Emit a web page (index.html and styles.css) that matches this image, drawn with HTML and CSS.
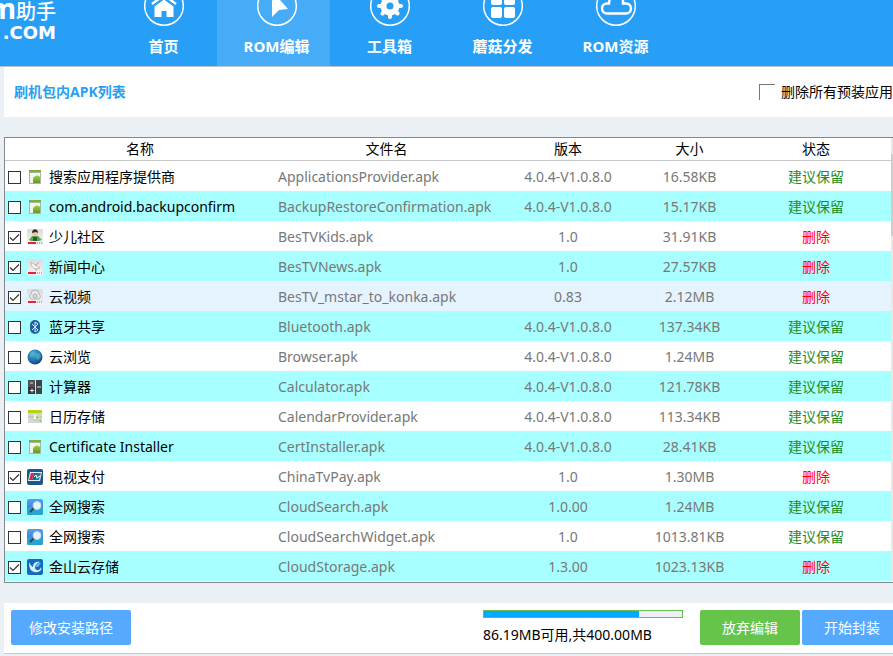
FILE: index.html
```html
<!DOCTYPE html>
<html lang="zh-CN">
<head>
<meta charset="utf-8">
<title>ROM编辑</title>
<link rel="stylesheet" href="styles.css">
</head>
<body>
<svg class="disNone">
	<linearGradient id="g-grey" x1="0" y1="0" x2="0" y2="1"><stop offset="0" stop-color="#dcdcdc"/><stop offset="1" stop-color="#f4f4f4"/></linearGradient>
	<linearGradient id="g-blue" x1="0" y1="0" x2="0" y2="1"><stop offset="0" stop-color="#5a9df0"/><stop offset="1" stop-color="#1878bc"/></linearGradient>
	<linearGradient id="g-green" x1="0" y1="0" x2="0" y2="1"><stop offset="0" stop-color="#9ccc4a"/><stop offset="1" stop-color="#5f9a22"/></linearGradient>
	<radialGradient id="g-globe" cx="0.4" cy="0.3" r="0.7"><stop offset="0" stop-color="#4fb4e4"/><stop offset="1" stop-color="#0d4686"/></radialGradient>
	<symbol id="i-apk" viewBox="0 0 16 16">
		<rect x="2" y="1" width="12" height="14" rx="1" fill="#a9b59c"/>
		<rect x="3" y="4" width="10" height="10" fill="#f2f4ee"/>
		<rect x="2" y="1" width="12" height="2" fill="#7fae3c"/>
		<path d="M6 14v-3a4 4 0 0 1 7-3v6z" fill="url(#g-green)"/>
	</symbol>
	<symbol id="i-kids" viewBox="0 0 16 16">
		<rect width="16" height="16" rx="1" fill="url(#g-grey)"/>
		<path d="M2 11l3-4h6l4 4-3 1H4z" fill="#55ad48"/>
		<circle cx="8" cy="4" r="3" fill="#efc3a4"/>
		<path d="M5 4c0-5 6-5 6 0L9 3z" fill="#3b2b27"/>
		<path d="M6 8h4v4H6z" fill="#3d4b55"/>
		<path d="M1 14h8" stroke="#e0243b" stroke-width="2"/>
		<path d="M10 14h5" stroke="#777" stroke-dasharray="1 1"/>
	</symbol>
	<symbol id="i-news" viewBox="0 0 16 16">
		<rect width="16" height="16" rx="1" fill="url(#g-grey)"/>
		<path d="M4 3c0 6 4 8 9 6z" fill="#f8f8f8" stroke="#bbb"/>
		<path d="M8 7l4-4M9 10v2" stroke="#aaa"/>
		<path d="M1 14h8" stroke="#e0243b" stroke-width="2"/>
		<path d="M10 14h5" stroke="#777" stroke-dasharray="1 1"/>
	</symbol>
	<symbol id="i-video" viewBox="0 0 16 16">
		<rect width="16" height="16" rx="1" fill="url(#g-grey)"/>
		<path d="M4 10a3 3 0 0 1 0-5 4 4 0 0 1 8 0 3 3 0 0 1 0 5z" fill="#e8e8e8" stroke="#b5b5b5"/>
		<circle cx="8" cy="7" r="2" fill="#ddd" stroke="#b0b0b0"/>
		<path d="M1 13h8" stroke="#e0243b" stroke-width="2"/>
		<path d="M10 13h5" stroke="#777" stroke-dasharray="1 1"/>
	</symbol>
	<symbol id="i-bt" viewBox="0 0 16 16">
		<rect x="3" y="1" width="10" height="14" rx="5" fill="#1c62a8"/>
		<path d="M5 5l6 6-3 2V3l3 2-6 6" fill="none" stroke="#d7ebfa"/>
	</symbol>
	<symbol id="i-globe" viewBox="0 0 16 16">
		<circle cx="8" cy="8" r="7.5" fill="url(#g-globe)"/>
		<path d="M3 4l3-2 2 2-2 3-3 1zM9 5l4-1 1 4-3 3-2-2z" fill="#55b8cc" opacity=".6"/>
	</symbol>
	<symbol id="i-calc" viewBox="0 0 16 16">
		<rect x="1" y="1" width="7" height="7" fill="#4e5256"/><rect x="1" y="8" width="7" height="7" fill="#34383c"/>
		<rect x="9" y="1" width="6" height="14" fill="#3f4347"/>
		<path d="M3 4h3M3 11.500h4M5 9.500v4M10 8h4" stroke="#dfe4e6"/>
	</symbol>
	<symbol id="i-cal" viewBox="0 0 16 16">
		<rect x="1" y="1" width="14" height="13" fill="#d5d8d2"/>
		<path d="M1 1h14v3H1z" fill="#b4d313"/>
		<path d="M1 8h5M6 11h5M11 8h4" stroke="#b7bbb4"/>
		<path d="M7 5l6 3-6 3z" fill="#eff5df"/>
		<path d="M9 7l3 1-2 2zM12 11h2v2z" fill="#80b92a"/>
	</symbol>
	<symbol id="i-pay" viewBox="0 0 16 16">
		<rect width="16" height="16" rx="2" fill="#1d568c"/>
		<path d="M3 3h12l-2 9H1z" fill="#e4eef4"/>
		<path d="M4 4h3l-2 7H2z" fill="#d82c3c"/><path d="M7 4h4l-2 7H5z" fill="#215d9e"/><path d="M10 4h4l-2 7H8z" fill="#1d8790"/>
		<path d="M7 8l2-2 1 3 3-2" fill="none" stroke="#fff"/>
	</symbol>
	<symbol id="i-search" viewBox="0 0 16 16">
		<rect width="16" height="16" rx="2" fill="url(#g-blue)"/>
		<path d="M0 9c4-3 8 2 16-1v6a2 2 0 0 1-2 2H2a2 2 0 0 1-2-2z" fill="#29a3d3"/>
		<path d="M7 9l-4 4" stroke="#26445a" stroke-width="2"/>
		<circle cx="10" cy="6.500" r="4" fill="#e6f3fa" stroke="#c3d2dc"/>
	</symbol>
	<symbol id="i-cloud" viewBox="0 0 16 16">
		<rect width="16" height="16" rx="2" fill="#126bbd"/>
		<path d="M2 3c0 8 3 11 9 10 3-1 4-3 3-5-1 4-5 4-6 1 0-3 2-5 5-6-5-1-7 2-7 5-2-1-3-3-4-5z" fill="#d7effc"/>
		<path d="M9 8c0-3 2-4 5-4l-3 4z" fill="#61bdf1"/>
	</symbol>
</svg>

<header class="top">
	<div class="logo">
		<span class="logo-name"><b>m</b>助手</span>
		<span class="logo-com">.COM</span>
	</div>
	<nav class="nav">
		<a href="#">
			<svg viewBox="0 0 40 40"><circle cx="20" cy="20" r="19.300"/><path class="fill" d="M10.500 31V20.500l9.500-7 9.500 7V31h-7v-6h-5v6z"/><path class="line" d="M8 18l12-9 12 9"/></svg>
			首页
		</a>
		<a href="#" class="active">
			<svg viewBox="0 0 40 40"><circle cx="20" cy="20" r="19.300"/><path class="fill" d="M15 5l16 18-9 1-7 7z"/></svg>
			ROM编辑
		</a>
		<a href="#">
			<svg viewBox="0 0 40 40"><circle cx="20" cy="20" r="19.300"/><circle class="ring" cx="20" cy="20" r="6.500"/><path class="teeth" d="M20 9v4M20 27v4M9 20h4M27 20h4M12.500 12.500l3 3M24.500 24.500l3 3M27.500 12.500l-3 3M15.500 24.500l-3 3"/></svg>
			工具箱
		</a>
		<a href="#">
			<svg viewBox="0 0 40 40"><circle cx="20" cy="20" r="19.300"/><g class="fill"><rect x="8" y="8" width="11" height="11" rx="2"/><rect x="21" y="8" width="11" height="11" rx="2"/><rect x="8" y="21" width="11" height="11" rx="2"/><rect x="21" y="21" width="11" height="11" rx="2"/></g></svg>
			蘑菇分发
		</a>
		<a href="#">
			<svg viewBox="0 0 40 40"><circle cx="20" cy="20" r="19.300"/><path class="line" d="M11 27.500a5 5 0 0 1 0-10h2c0-10 14-10 14-2v2h3a5 5 0 0 1 0 10z"/></svg>
			ROM资源
		</a>
	</nav>
</header>

<main class="main">
	<div class="title-bar">
		<h1>刷机包内APK列表</h1>
		<label class="del-all"><input type="checkbox">删除所有预装应用</label>
	</div>

	<div class="list">
		<table class="apk-table">
			<colgroup>
				<col class="c-name"><col class="c-file"><col class="c-ver"><col class="c-size"><col>
			</colgroup>
			<thead>
				<tr><th>名称</th><th>文件名</th><th>版本</th><th>大小</th><th>状态</th></tr>
			</thead>
			<tbody>
				<tr><td><label><input type="checkbox"><svg><use href="#i-apk"/></svg>搜索应用程序提供商</label></td><td>ApplicationsProvider.apk</td><td>4.0.4-V1.0.8.0</td><td>16.58KB</td><td class="keep">建议保留</td></tr>
				<tr><td><label><input type="checkbox"><svg><use href="#i-apk"/></svg>com.android.backupconfirm</label></td><td>BackupRestoreConfirmation.apk</td><td>4.0.4-V1.0.8.0</td><td>15.17KB</td><td class="keep">建议保留</td></tr>
				<tr><td><label><input type="checkbox" checked><svg><use href="#i-kids"/></svg>少儿社区</label></td><td>BesTVKids.apk</td><td>1.0</td><td>31.91KB</td><td class="del">删除</td></tr>
				<tr><td><label><input type="checkbox" checked><svg><use href="#i-news"/></svg>新闻中心</label></td><td>BesTVNews.apk</td><td>1.0</td><td>27.57KB</td><td class="del">删除</td></tr>
				<tr class="hover"><td><label><input type="checkbox" checked><svg><use href="#i-video"/></svg>云视频</label></td><td>BesTV_mstar_to_konka.apk</td><td>0.83</td><td>2.12MB</td><td class="del">删除</td></tr>
				<tr><td><label><input type="checkbox"><svg><use href="#i-bt"/></svg>蓝牙共享</label></td><td>Bluetooth.apk</td><td>4.0.4-V1.0.8.0</td><td>137.34KB</td><td class="keep">建议保留</td></tr>
				<tr><td><label><input type="checkbox"><svg><use href="#i-globe"/></svg>云浏览</label></td><td>Browser.apk</td><td>4.0.4-V1.0.8.0</td><td>1.24MB</td><td class="keep">建议保留</td></tr>
				<tr><td><label><input type="checkbox"><svg><use href="#i-calc"/></svg>计算器</label></td><td>Calculator.apk</td><td>4.0.4-V1.0.8.0</td><td>121.78KB</td><td class="keep">建议保留</td></tr>
				<tr><td><label><input type="checkbox"><svg><use href="#i-cal"/></svg>日历存储</label></td><td>CalendarProvider.apk</td><td>4.0.4-V1.0.8.0</td><td>113.34KB</td><td class="keep">建议保留</td></tr>
				<tr><td><label><input type="checkbox"><svg><use href="#i-apk"/></svg>Certificate Installer</label></td><td>CertInstaller.apk</td><td>4.0.4-V1.0.8.0</td><td>28.41KB</td><td class="keep">建议保留</td></tr>
				<tr><td><label><input type="checkbox" checked><svg><use href="#i-pay"/></svg>电视支付</label></td><td>ChinaTvPay.apk</td><td>1.0</td><td>1.30MB</td><td class="del">删除</td></tr>
				<tr><td><label><input type="checkbox"><svg><use href="#i-search"/></svg>全网搜索</label></td><td>CloudSearch.apk</td><td>1.0.00</td><td>1.24MB</td><td class="keep">建议保留</td></tr>
				<tr><td><label><input type="checkbox"><svg><use href="#i-search"/></svg>全网搜索</label></td><td>CloudSearchWidget.apk</td><td>1.0</td><td>1013.81KB</td><td class="keep">建议保留</td></tr>
				<tr><td><label><input type="checkbox" checked><svg><use href="#i-cloud"/></svg>金山云存储</label></td><td>CloudStorage.apk</td><td>1.3.00</td><td>1023.13KB</td><td class="del">删除</td></tr>
			</tbody>
		</table>
		<div class="scroll"><div class="thumb"></div></div>
	</div>

	<div class="bottom-bar">
		<button type="button" class="btn path-btn">修改安装路径</button>
		<div class="space">
			<progress id="space" value="313.81" max="400"></progress>
			<label for="space">86.19MB可用,共400.00MB</label>
		</div>
		<button type="button" class="btn green">放弃编辑</button>
		<button type="button" class="btn">开始封装</button>
	</div>
</main>
</body>
</html>
```
FILE: styles.css
```css
*{
	box-sizing: border-box;
}
body{
	margin: 0;
	background: #ebf0f5;
	font: 14px/20px "Noto Sans", "Noto Sans CJK SC", sans-serif;
	color: #000;
	overflow: hidden;
}
.disNone{
	position: absolute;
	width: 0;
	height: 0;
}

/* 顶部导航 */
.top{
	display: flex;
	align-items: flex-end;
	height: 67px;
	background: #289ff6;
	border-bottom: 1px solid #bcc3ca;
	overflow: hidden;
	color: #fff;
}
.logo{
	width: 104px;
	display: flex;
	flex-direction: column;
	align-items: flex-end;
	padding: 0 48px 24px 0;
	white-space: nowrap;
}
.logo-name{
	font-size: 20px;
	line-height: 24px;
	font-weight: 500;
}
.logo-name b{
	font-size: 28px;
}
.logo-com{
	font: bold 18px/18px "DejaVu Sans", sans-serif;
}
.nav{
	display: flex;
}
.nav a{
	width: 113px;
	height: 80px;
	display: flex;
	flex-direction: column;
	align-items: center;
	gap: 10px;
	padding: 4px 0 10px 6px;
	color: #fff;
	font-size: 15px;
	font-weight: bold;
	text-decoration: none;
}
.nav a.active{
	background: #47acf8;
}
.nav svg{
	width: 40px;
	height: 40px;
	flex: none;
	fill: none;
	stroke: #fff;
	stroke-width: 1.5;
}
.nav a{
	justify-content: flex-end;
}
.nav .fill{
	fill: #fff;
	stroke: none;
}
.nav .line{
	stroke-width: 2.5;
}
.nav .ring{
	stroke-width: 6;
}
.nav .teeth{
	stroke-width: 4;
	stroke-linecap: round;
}

.main{
	padding-left: 4px;
}
.title-bar{
	height: 50px;
	display: flex;
	align-items: center;
	justify-content: space-between;
	padding-left: 10px;
	background: #fff;
}
.title-bar h1{
	margin: 0;
	font-size: 14px;
	color: #289ff6;
}
.del-all{
	display: flex;
	align-items: center;
	gap: 6px;
	white-space: nowrap;
}
.del-all input{
	appearance: none;
	width: 16px;
	height: 16px;
	margin: 0;
	border-top: 1px solid #777;
	border-left: 1px solid #777;
}

/* APK列表 */
.list{
	display: flex;
	margin-top: 20px;
	padding-bottom: 1px;
	border: 1px solid #828790;
	border-right: none;
	background: #fff;
}
.apk-table{
	flex: 1;
	table-layout: fixed;
	border-collapse: separate;
	border-spacing: 0;
}
.c-name{
	width: 270px;
}
.c-file{
	width: 223px;
}
.c-ver{
	width: 140px;
}
.c-size{
	width: 103px;
}
.apk-table th{
	height: 23px;
	padding: 0;
	font-weight: normal;
	border-bottom: 1px solid #c8c8c8;
}
.apk-table td{
	height: 30px;
	padding: 2px 3px 0;
	text-align: center;
	color: #787878;
	white-space: nowrap;
}
.apk-table td:nth-child(-n+2){
	text-align: left;
}
.apk-table tbody tr:nth-child(even){
	background: #a8ffff;
}
.apk-table tbody tr.hover{
	background: #e5f3ff;
}
.apk-table td.keep{
	color: #1e8c1e;
}
.apk-table td.del{
	color: #f00;
}
.apk-table label{
	display: flex;
	align-items: center;
	color: #000;
}
.apk-table svg{
	width: 16px;
	height: 16px;
	margin: 0 6px;
}
.apk-table input{
	appearance: none;
	width: 13px;
	height: 13px;
	margin: 0;
	border: 1px solid #333;
	background: #fff;
}
.apk-table input:checked{
	background: #fff url("data:image/svg+xml,%3Csvg xmlns='http://www.w3.org/2000/svg' viewBox='0 0 11 11'%3E%3Cpath d='M1 5.500l3 3 6-6' fill='none' stroke='%23333' stroke-width='1.200'/%3E%3C/svg%3E") center no-repeat;
}
.scroll{
	width: 2px;
	padding-top: 16px;
	background: #e8e8e8;
}
.thumb{
	height: 82px;
	background: #cdcdcd;
}

/* 底部操作栏 */
.bottom-bar{
	display: flex;
	align-items: center;
	margin: 20px -9px 0 0;
	padding: 7px 0 8px 7px;
	background: #fff;
	border-bottom: 1px solid #c8c8d0;
}
.btn{
	width: 100px;
	height: 35px;
	padding: 0;
	border: none;
	border-radius: 2px;
	background: #55aaff;
	color: #fff;
	font: inherit;
}
.btn.path-btn{
	width: 120px;
	margin-right: auto;
}
.btn.green{
	margin: 0 2px 0 17px;
	background: #67c44a;
}
.space{
	width: 200px;
	display: flex;
	flex-direction: column;
	gap: 7px;
}
.space progress{
	appearance: none;
	width: 100%;
	height: 8px;
	border: 1px solid #67c44a;
}
.space progress::-webkit-progress-bar{
	background: #ebf0f5;
}
.space progress::-webkit-progress-value{
	background: #00a8ff;
}
```
